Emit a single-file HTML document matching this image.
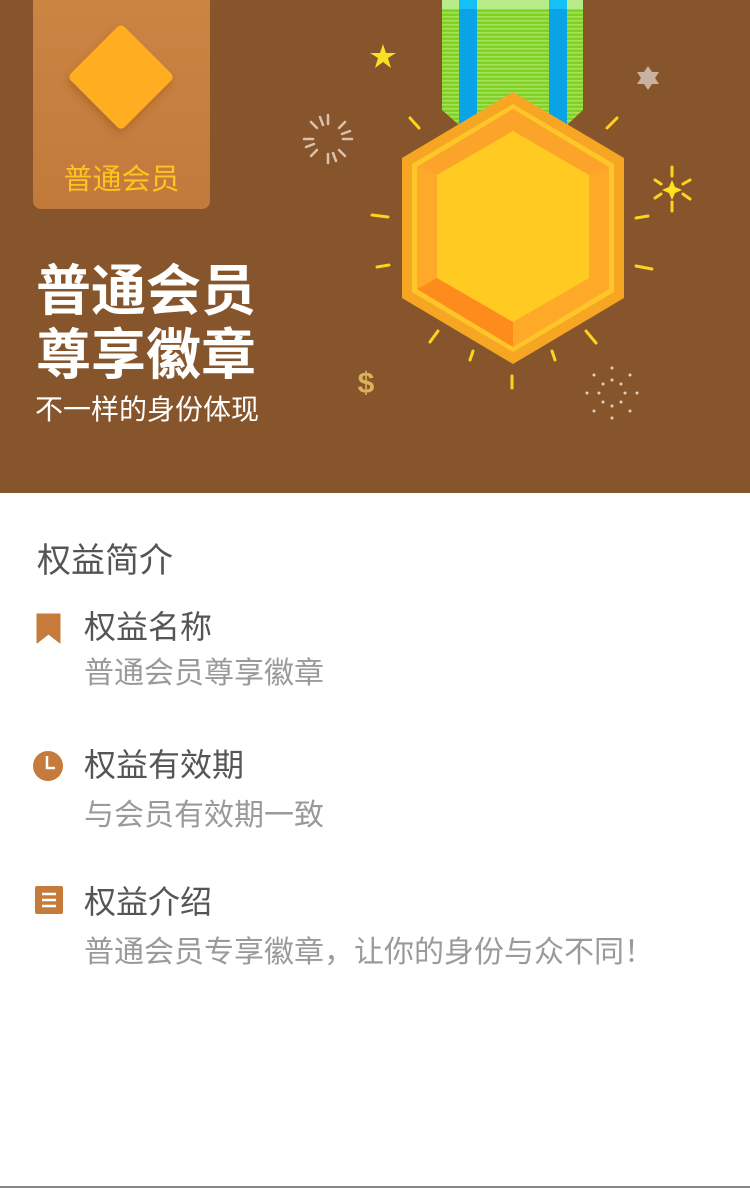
<!DOCTYPE html>
<html><head><meta charset="utf-8"><style>
*{margin:0;padding:0;box-sizing:border-box}
body{width:750px;height:1188px;background:#fff;font-family:"Liberation Sans","Noto Sans CJK SC",sans-serif;position:relative;overflow:hidden}
.hd{position:absolute;left:0;top:0;width:750px;height:493px;background:#87552b}
.card{position:absolute;left:33px;top:0;width:177px;height:209px;background:linear-gradient(#cc8443,#c27a3c);border-radius:0 0 8px 8px}
.dia{position:absolute;left:83px;top:39px;width:76px;height:76px;background:#ffae22;transform:rotate(45deg);border-radius:5px;box-shadow:2px 4px 8px rgba(120,60,0,.3)}
.ct{position:absolute;left:33px;width:177px;top:160px;text-align:center;color:#ffc21e;font-size:29px;line-height:40px}
.t{position:absolute;left:36px;color:#fff;font-weight:bold;font-size:55px;line-height:64px;top:259px}
.s{position:absolute;left:35px;top:392px;color:#fff;font-size:28px;line-height:36px}
.h{position:absolute;left:37px;top:539px;font-size:34px;color:#555;line-height:44px}
.it{position:absolute;left:84px;font-size:32px;color:#555;line-height:42px}
.sb{position:absolute;left:84px;font-size:30px;color:#9a9a9a;line-height:40px}
</style></head><body>
<div class="hd">
<div class="card"></div><div class="dia"></div>
<div class="ct">普通会员</div>
<div class="t">普通会员<br>尊享徽章</div>
<div class="s">不一样的身份体现</div>
<svg width="750" height="493" style="position:absolute;left:0;top:0">
<defs><pattern id="st" width="4" height="4" patternUnits="userSpaceOnUse"><rect width="4" height="4" fill="#7ed321"/><rect width="4" height="1.5" fill="#a6e35a"/></pattern></defs>
<polygon points="442,0 583,0 583,110 567,125 459,125 442,110" fill="url(#st)"/>
<rect x="442" y="0" width="141" height="9" fill="#b8ec88"/>
<rect x="459" y="0" width="18" height="125" fill="#0aa3e6"/>
<rect x="549" y="0" width="18" height="125" fill="#0aa3e6"/>
<rect x="459" y="0" width="18" height="9" fill="#14c0f5"/><rect x="549" y="0" width="18" height="9" fill="#14c0f5"/>
<polygon points="513,92 624,158 624,298 513,364 402,298 402,158" fill="#f6a623"/>
<polygon points="513,104 614,164 614,292 513,352 412,292 412,164" fill="#ffc629"/>
<polygon points="513,109 609,167 609,289 513,347 417,289 417,167" fill="#ffa928"/>
<polygon points="513,109 609,167 589,175 513,131 437,175 417,167" fill="#fca42a"/>
<polygon points="417,289 437,278 513,322 513,347" fill="#fd8c1c"/>
<polygon points="513,131 589,175 589,278 513,322 437,278 437,175" fill="#ffca22"/>
<g stroke="#ffd21f" stroke-width="3" stroke-linecap="round">
<line x1="410" y1="118" x2="419" y2="128"/><line x1="607" y1="128" x2="617" y2="118"/>
<line x1="372" y1="215" x2="388" y2="217"/><line x1="377" y1="267" x2="389" y2="265"/>
<line x1="636" y1="218" x2="648" y2="216"/><line x1="636" y1="266" x2="652" y2="269"/>
<line x1="430" y1="342" x2="438" y2="331"/><line x1="470" y1="360" x2="473" y2="351"/>
<line x1="512" y1="376" x2="512" y2="388"/><line x1="552" y1="351" x2="555" y2="360"/>
<line x1="586" y1="331" x2="596" y2="343"/>
<line x1="672" y1="167" x2="672" y2="176"/><line x1="672" y1="202" x2="672" y2="211"/>
<line x1="655" y1="180" x2="661" y2="184"/><line x1="683" y1="184" x2="690" y2="180"/>
<line x1="655" y1="198" x2="661" y2="194"/><line x1="683" y1="194" x2="690" y2="199"/>
</g>
<path d="M672,180 L675,187 L682,190 L675,193 L672,200 L669,193 L662,190 L669,187Z" fill="#ffe01f"/>
<path d="M383,44 L386,53 L396,53 L388,58 L391,68 L383,62 L375,68 L378,58 L370,53 L380,53Z" fill="#f8e026"/>
<path d="M648,66 L652,72 L659,72 L655,78 L659,84 L652,84 L648,90 L644,84 L637,84 L641,78 L637,72 L644,72Z" fill="#c9b1a0"/>
<g stroke="#d9c2ad" stroke-width="2.5" stroke-linecap="round" transform="translate(328,139)">
<line x1="0" y1="-24" x2="0" y2="-15"/><line x1="0" y1="15" x2="0" y2="24"/><line x1="-24" y1="0" x2="-15" y2="0"/><line x1="15" y1="0" x2="24" y2="0"/>
<line x1="-17" y1="-17" x2="-11" y2="-11"/><line x1="11" y1="11" x2="17" y2="17"/><line x1="-17" y1="17" x2="-11" y2="11"/><line x1="11" y1="-11" x2="17" y2="-17"/>
<line x1="-8" y1="-22" x2="-5" y2="-14"/><line x1="8" y1="22" x2="5" y2="14"/><line x1="-22" y1="8" x2="-14" y2="5"/><line x1="22" y1="-8" x2="14" y2="-5"/>
</g>
<g fill="#e0d0c0" transform="translate(612,393)">
<circle cx="0" cy="-25" r="1.5"/><circle cx="0" cy="25" r="1.5"/><circle cx="-25" cy="0" r="1.5"/><circle cx="25" cy="0" r="1.5"/>
<circle cx="-18" cy="-18" r="1.5"/><circle cx="18" cy="18" r="1.5"/><circle cx="-18" cy="18" r="1.5"/><circle cx="18" cy="-18" r="1.5"/>
<circle cx="0" cy="-13" r="1.5"/><circle cx="0" cy="13" r="1.5"/><circle cx="-13" cy="0" r="1.5"/><circle cx="13" cy="0" r="1.5"/>
<circle cx="-9" cy="-9" r="1.5"/><circle cx="9" cy="9" r="1.5"/><circle cx="-9" cy="9" r="1.5"/><circle cx="9" cy="-9" r="1.5"/>
</g>
<text x="366" y="393" font-size="30" font-weight="bold" fill="#d9b25a" text-anchor="middle" font-family="Liberation Sans,sans-serif">$</text>
</svg>
</div>
<div class="h">权益简介</div>
<svg width="30" height="340" style="position:absolute;left:33px;top:610px">
<path d="M4,4 H27 V33 L15.5,24 L4,33Z" fill="#c67b3c" stroke="#c67b3c" stroke-width="1" stroke-linejoin="round"/>
<circle cx="15" cy="156" r="15" fill="#c67b3c"/><path d="M14,146 V158 H22" stroke="#fff" stroke-width="2.5" fill="none"/>
<rect x="2" y="276" width="28" height="28" rx="2" fill="#c67b3c"/>
<g stroke="#fff" stroke-width="2.5"><line x1="9" y1="284" x2="23" y2="284"/><line x1="9" y1="290" x2="23" y2="290"/><line x1="9" y1="296" x2="23" y2="296"/></g>
</svg>
<div class="it" style="top:606px">权益名称</div>
<div class="sb" style="top:654px">普通会员尊享徽章</div>
<div class="it" style="top:744px">权益有效期</div>
<div class="sb" style="top:796px">与会员有效期一致</div>
<div class="it" style="top:881px">权益介绍</div>
<div class="sb" style="top:933px">普通会员专享徽章，让你的身份与众不同！</div>
<div style="position:absolute;left:0;top:1186px;width:750px;height:2px;background:#888"></div>
</body></html>
